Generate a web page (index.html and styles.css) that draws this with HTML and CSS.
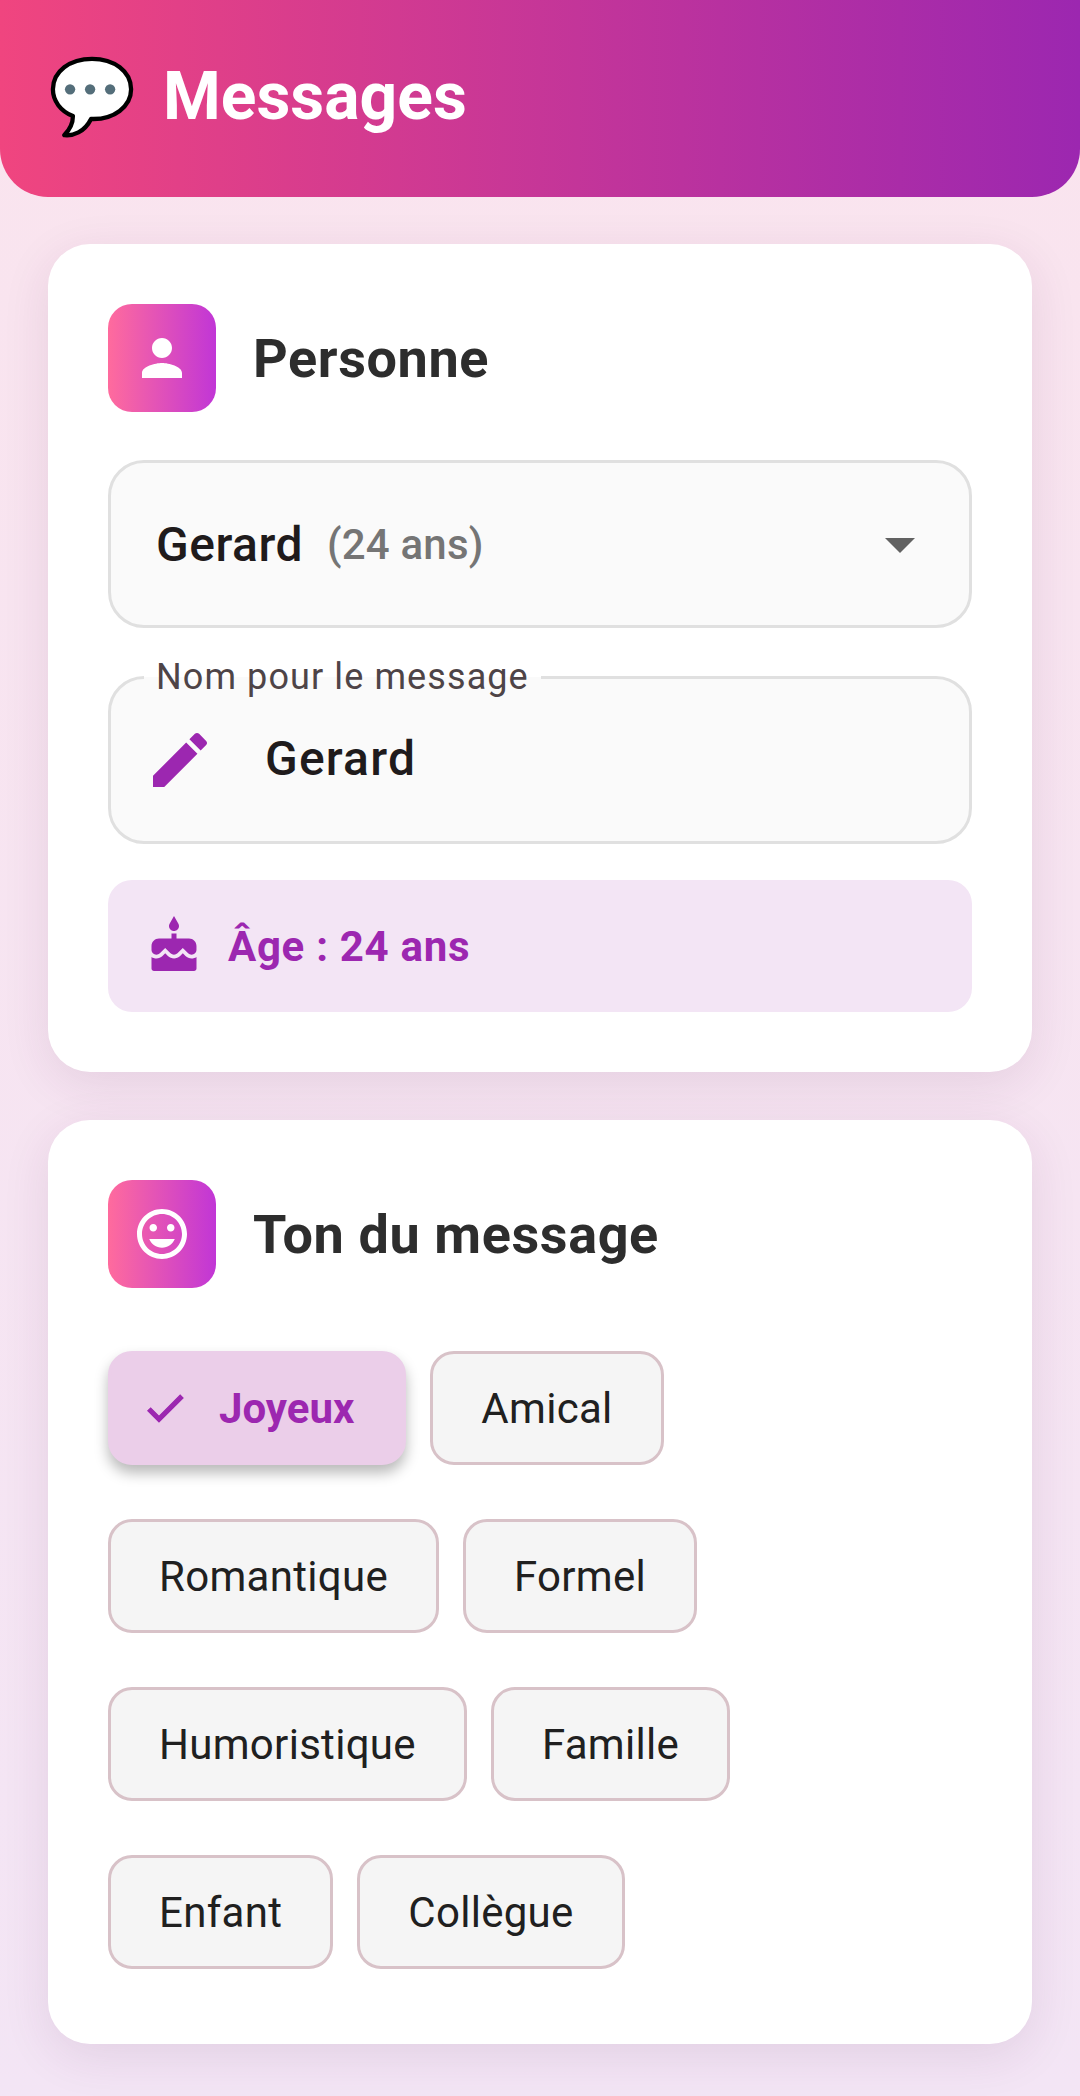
FILE: index.html
```html
<!DOCTYPE html>
<html lang="fr">
<head>
<meta charset="utf-8">
<title>Messages</title>
<link rel="stylesheet" href="styles.css">
</head>
<body>
<header class="app-bar">
  <svg class="bubble" viewBox="0 0 88 86" width="84" height="82"><path d="M44 3C21 3 3 16 3 35c0 12 8 23 21 28 0 7-3 14-9 20 9 1 21-3 28-17 24 1 42-13 42-31C85 16 67 3 44 3z" fill="#fff" stroke="#000" stroke-width="4.5" stroke-linejoin="round"/><circle cx="21" cy="35" r="5.4" fill="#546e7a"/><circle cx="42" cy="35" r="5.4" fill="#546e7a"/><circle cx="63" cy="35" r="5.4" fill="#546e7a"/></svg>
  <h1 class="app-title">Messages</h1>
</header>
<main class="content">
  <section class="card">
    <div class="card-head">
      <span class="head-icon"><svg viewBox="0 0 24 24" width="60" height="60"><path d="M12 12c2.21 0 4-1.79 4-4s-1.79-4-4-4-4 1.79-4 4 1.79 4 4 4zm0 2c-2.67 0-8 1.34-8 4v2h16v-2c0-2.66-5.33-4-8-4z"/></svg></span>
      <h2 class="card-title">Personne</h2>
    </div>
    <div class="field select">
      <span class="select-name">Gerard</span>
      <span class="select-age">(24 ans)</span>
      <svg class="arrow" viewBox="0 0 24 24" width="72" height="72"><path d="M7 10l5 5 5-5z"/></svg>
    </div>
    <div class="field name-field">
      <span class="float-label">Nom pour le message</span>
      <svg class="edit" viewBox="0 0 24 24" width="72" height="72"><path d="M3 17.25V21h3.75L17.81 9.94l-3.75-3.75L3 17.25zM20.71 7.04c.39-.39.39-1.02 0-1.41l-2.34-2.34c-.39-.39-1.02-.39-1.41 0l-1.83 1.83 3.75 3.75 1.83-1.83z"/></svg>
      <span class="name-value">Gerard</span>
    </div>
    <div class="age-box">
      <svg class="cake" viewBox="0 0 24 24" width="60" height="60"><path d="M12 6c1.11 0 2-.9 2-2 0-.38-.1-.73-.29-1.03L12 0l-1.71 2.97c-.19.3-.29.65-.29 1.03 0 1.1.9 2 2 2zm4.6 9.99l-1.07-1.07-1.08 1.07c-1.3 1.3-3.58 1.31-4.89 0l-1.07-1.07-1.09 1.07C6.75 16.64 5.88 17 4.96 17c-.73 0-1.4-.23-1.96-.61V21c0 .55.45 1 1 1h16c.55 0 1-.45 1-1v-4.61c-.56.38-1.23.61-1.96.61-.92 0-1.79-.36-2.44-1.01zM18 9h-5V7h-2v2H6c-1.66 0-3 1.34-3 3v1.54c0 1.08.88 1.96 1.96 1.96.52 0 1.02-.2 1.38-.57l2.14-2.13 2.13 2.13c.74.74 2.03.74 2.77 0l2.14-2.13 2.13 2.13c.37.37.86.57 1.38.57 1.08 0 1.96-.88 1.96-1.96V12C21 10.34 19.66 9 18 9z"/></svg>
      <span class="age-text">Âge : 24 ans</span>
    </div>
  </section>
  <section class="card card-tone">
    <div class="card-head">
      <span class="head-icon"><svg viewBox="0 0 24 24" width="60" height="60"><path d="M11.99 2C6.47 2 2 6.48 2 12s4.47 10 9.99 10C17.52 22 22 17.52 22 12S17.52 2 11.99 2zM12 20c-4.42 0-8-3.58-8-8s3.58-8 8-8 8 3.58 8 8-3.58 8-8 8zm3.5-9c.83 0 1.5-.67 1.5-1.5S16.33 8 15.5 8 14 8.67 14 9.5s.67 1.5 1.5 1.5zm-7 0c.83 0 1.5-.67 1.5-1.5S9.33 8 8.5 8 7 8.67 7 9.5 7.67 11 8.5 11zm3.5 6.5c2.33 0 4.31-1.46 5.11-3.5H6.89c.8 2.04 2.78 3.5 5.11 3.5z"/></svg></span>
      <h2 class="card-title">Ton du message</h2>
    </div>
    <div class="chips">
      <div class="chip-row">
        <span class="chip chip-on"><svg class="check" viewBox="0 0 24 24"><path d="M9 16.17L4.83 12l-1.42 1.41L9 19 21 7l-1.41-1.41z"/></svg>Joyeux</span>
        <span class="chip">Amical</span>
      </div>
      <div class="chip-row">
        <span class="chip">Romantique</span>
        <span class="chip">Formel</span>
      </div>
      <div class="chip-row">
        <span class="chip">Humoristique</span>
        <span class="chip">Famille</span>
      </div>
      <div class="chip-row">
        <span class="chip">Enfant</span>
        <span class="chip">Collègue</span>
      </div>
    </div>
  </section>
</main>
</body>
</html>
```
FILE: styles.css
```css
* { box-sizing: border-box; }
html, body { margin: 0; height: 100%; }
body {
  width: 1080px;
  height: 2096px;
  overflow: hidden;
  font-family: Roboto, "Liberation Sans", sans-serif;
  background: linear-gradient(180deg, #fae4ee 0%, #f3e5f5 100%);
}
.app-bar {
  height: 197px;
  padding: 0 48px 0 50px;
  display: flex;
  align-items: center;
  gap: 29px;
  border-radius: 0 0 48px 48px;
  background: linear-gradient(90deg, #f0457f 0%, #9c27b0 100%);
}
.bubble { flex: none; margin-top: -4px; }
.app-title {
  margin: -3px 0 0;
  font-size: 66px;
  font-weight: 700;
  line-height: 88px;
  color: #fff;
}
.content {
  padding: 47px 48px 0;
  display: flex;
  flex-direction: column;
  gap: 48px;
}
.card {
  background: #fff;
  border-radius: 42px;
  padding: 60px;
  box-shadow: 0 12px 48px rgba(90, 40, 90, 0.11);
}
.card-tone { padding-bottom: 75px; }
.card-head {
  display: flex;
  align-items: center;
  gap: 37px;
}
.head-icon {
  width: 108px;
  height: 108px;
  flex: none;
  display: flex;
  align-items: center;
  justify-content: center;
  border-radius: 24px;
  background: linear-gradient(90deg, #ff6b9d 0%, #c136d6 100%);
}
.head-icon svg { fill: #fff; }
.card-title {
  margin: 0;
  font-size: 54px;
  font-weight: 700;
  letter-spacing: 0.6px;
  color: #2d2d2d;
}
.field {
  height: 168px;
  border: 3px solid #e0e0e0;
  border-radius: 36px;
  background: #fafafa;
  display: flex;
  align-items: center;
}
.select {
  margin-top: 48px;
  padding: 0 45px;
}
.select-name {
  font-size: 48px;
  font-weight: 500;
  letter-spacing: 0.5px;
  color: #1f1b1c;
}
.select-age {
  margin-left: 24px;
  font-size: 42px;
  font-weight: 500;
  letter-spacing: 0.2px;
  color: #757575;
}
.arrow {
  margin-left: auto;
  margin-right: -12px;
  fill: #616161;
}
.name-field {
  position: relative;
  margin-top: 48px;
  padding-left: 33px;
}
.float-label {
  position: absolute;
  left: 33px;
  top: -23px;
  padding: 0 12px;
  font-size: 36px;
  line-height: 42px;
  letter-spacing: 1.1px;
  color: #4e4447;
  background: linear-gradient(180deg, #fff 50%, #fafafa 50%);
}
.edit { fill: #9c27b0; flex: none; }
.name-value {
  margin-left: 49px;
  margin-top: -3px;
  font-size: 48px;
  font-weight: 500;
  letter-spacing: 1.2px;
  color: #1f1b1c;
}
.age-box {
  margin-top: 36px;
  height: 132px;
  padding: 0 36px;
  display: flex;
  align-items: center;
  gap: 24px;
  border-radius: 24px;
  background: #f3e5f5;
}
.cake { fill: #9c27b0; flex: none; }
.age-text {
  font-size: 42px;
  font-weight: 700;
  letter-spacing: 0.7px;
  color: #9c27b0;
}
.chips {
  margin-top: 63px;
  display: flex;
  flex-direction: column;
  gap: 54px;
}
.chip-row {
  display: flex;
  gap: 24px;
}
.chip {
  height: 114px;
  padding: 0 48px;
  display: flex;
  align-items: center;
  border: 3px solid #d8c2c8;
  border-radius: 24px;
  background: #f5f5f5;
  font-size: 42px;
  letter-spacing: 0.3px;
  color: #202020;
}
.chip-on {
  padding: 0 49px 0 30px;
  border-color: #ebcee9;
  background: #ebcee9;
  font-weight: 700;
  letter-spacing: 0;
  color: #9c27b0;
  box-shadow: 0 8px 14px rgba(0, 0, 0, 0.28);
}
.check {
  fill: #9c27b0;
  stroke: #9c27b0;
  stroke-width: 0.6;
  flex: none;
  margin-right: 30px;
  width: 48px;
  height: 48px;
}
```
